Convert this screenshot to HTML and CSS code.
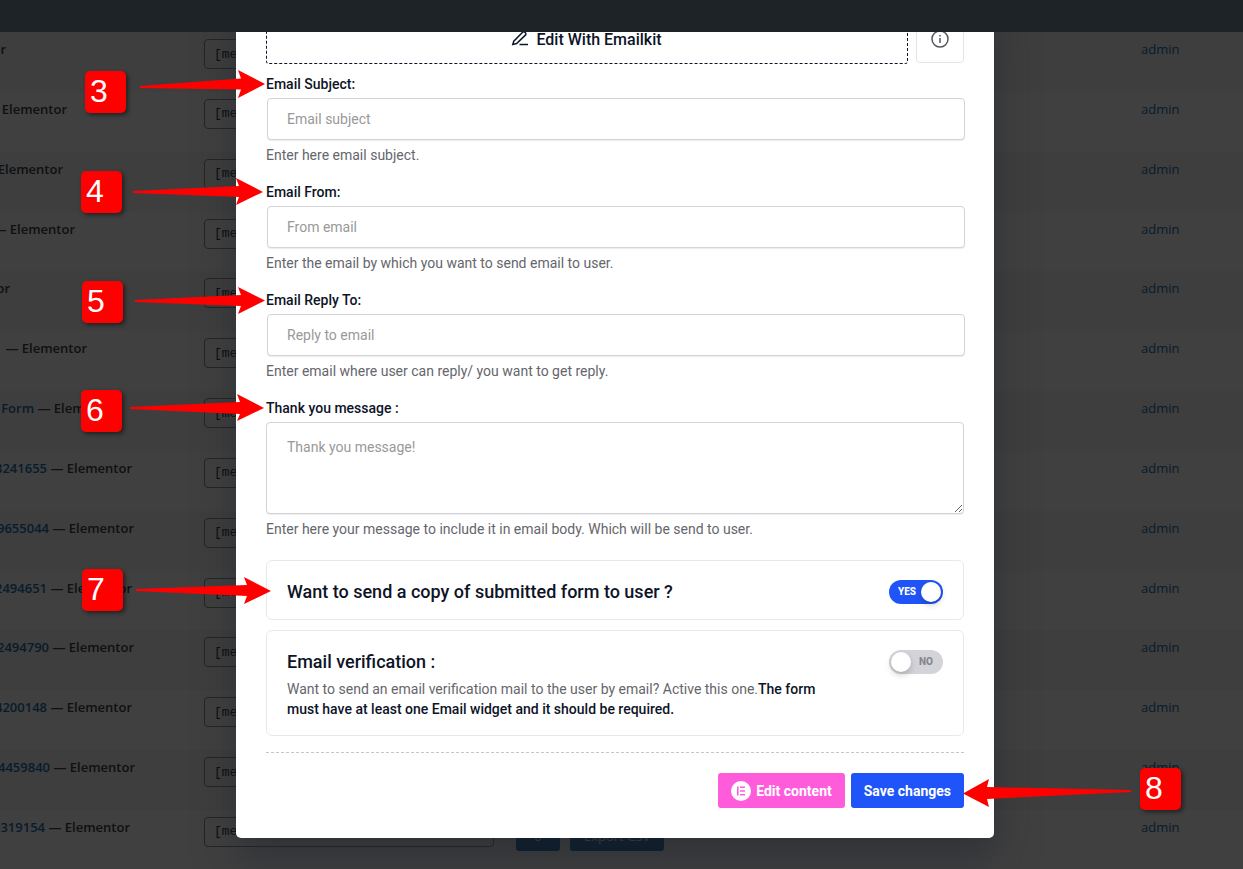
FILE: index.html
```html
<!DOCTYPE html>
<html lang="en">
<head>
<meta charset="utf-8">
<meta name="viewport" content="width=device-width, initial-scale=1">
<title>Form settings</title>
<link rel="stylesheet" href="styles.css">
</head>
<body>
<header class="admin-bar"></header>

<table class="forms">
  <colgroup><col class="col-title"><col class="col-code"><col><col class="col-author"></colgroup>
  <tbody id="rows"></tbody>
</table>

<div class="backdrop">
  <form class="modal" onsubmit="return false">
    <div class="kit-row">
      <button type="button" class="kit-button">
        <svg class="pen" viewBox="0 0 16 16" aria-hidden="true"><path d="M.8 12.500l1-3.400L10.600.3a1.600 1.600 0 0 1 2.300 0l.5.5a1.600 1.600 0 0 1 0 2.300L4.600 11.500zM7.500 12.500H16"/></svg>
        Edit With Emailkit
      </button>
      <button type="button" class="info-button" aria-label="Information">
        <svg class="info" viewBox="0 0 18 18" aria-hidden="true"><circle cx="9" cy="9" r="8"/><path d="M9 8v5M9 5v1.500"/></svg>
      </button>
    </div>

    <div class="field">
      <label for="subject">Email Subject:</label>
      <input id="subject" type="text" placeholder="Email subject">
      <p class="help">Enter here email subject.</p>
    </div>
    <div class="field">
      <label for="from">Email From:</label>
      <input id="from" type="text" placeholder="From email">
      <p class="help">Enter the email by which you want to send email to user.</p>
    </div>
    <div class="field">
      <label for="reply">Email Reply To:</label>
      <input id="reply" type="text" placeholder="Reply to email">
      <p class="help">Enter email where user can reply/ you want to get reply.</p>
    </div>
    <div class="field">
      <label for="thanks">Thank you message :</label>
      <textarea id="thanks" placeholder="Thank you message!"></textarea>
      <p class="help">Enter here your message to include it in email body. Which will be send to user.</p>
    </div>

    <div class="cards">
      <section class="card">
        <label class="card-title" for="copy">Want to send a copy of submitted form to user ?</label>
        <span class="switch"><input id="copy" type="checkbox" checked><span class="state on">YES</span><span class="state off">NO</span></span>
      </section>
      <section class="card">
        <div class="card-text">
          <label class="card-title" for="verify">Email verification :</label>
          <p class="card-help">Want to send an email verification mail to the user by email? Active this one.<strong>The form must have at least one Email widget and it should be required.</strong></p>
        </div>
        <span class="switch"><input id="verify" type="checkbox"><span class="state on">YES</span><span class="state off">NO</span></span>
      </section>
    </div>

    <footer class="actions">
      <button type="button" class="action edit">
        <svg class="elementor" viewBox="0 0 20 20" aria-hidden="true"><circle cx="10" cy="10" r="10" fill="#fff"/><path fill="#ff5cdc" d="M6 5.500h1.600v9H6zM9 5.500h5v1.600H9zM9 9.200h5v1.600H9zM9 12.900h5v1.600H9z"/></svg>
        Edit content
      </button>
      <button type="submit" class="action save">Save changes</button>
    </footer>
  </form>
</div>

<div class="notes">
  <svg class="arrows" aria-hidden="true">
    <path d="M140 86L241 78.500 238 70 265 84 238 98 241 89.500 140 88z"/>
    <path d="M133 191L239 186 236 178 263 192 236 205 239 197 133 193z"/>
    <path d="M135 300L241 295 238 287 265 300.500 238 314 241 306 135 302z"/>
    <path d="M130 407L240 402 237 394 264 408 237 421 240 414 130 409z"/>
    <path d="M136 589L247 585 244 577 271 591 244 604 247 596 136 591z"/>
    <path d="M1131 790L987 787 989 779 963 793.500 989 807 987 799 1131 792z"/>
  </svg>
  <span class="badge n3">3</span>
  <span class="badge n4">4</span>
  <span class="badge n5">5</span>
  <span class="badge n6">6</span>
  <span class="badge n7">7</span>
  <span class="badge n8">8</span>
</div>
<script src="rows.js"></script>
</body>
</html>
```
FILE: rows.js
```js
// name: tail of the form's link, note: text after it, end: where the scrolled title ends
const forms = [
  { name: "", note: "— Elementor", end: 6 },
  { name: "", note: "— Elementor", end: 67 },
  { name: "", note: "— Elementor", end: 63 },
  { name: "", note: "— Elementor", end: 75 },
  { name: "", note: "— Elementor", end: 10 },
  { name: "", note: "— Elementor", end: 87 },
  { name: "Form", note: "— Elementor", end: 119 },
  { name: "3241655", note: "— Elementor", end: 132 },
  { name: "9655044", note: "— Elementor", end: 134 },
  { name: "2494651", note: "— Elementor", end: 132 },
  { name: "2494790", note: "— Elementor", end: 134 },
  { name: "4200148", note: "— Elementor", end: 132 },
  { name: "4459840", note: "— Elementor", end: 135 },
  { name: "9319154", note: "— Elementor", end: 130, entries: 0 }
];
document.getElementById("rows").innerHTML = forms.map((f, i) => `
  <tr>
    <td><div class="title" style="width:${f.end}px"><span>${f.name ? `<a href="#">${f.name}</a> ` : ""}${f.note}</span></div></td>
    <td><input class="code" readonly aria-label="Shortcode ${i + 1}" value='[metform form_id="${1200 + i}"]'></td>
    <td>${"entries" in f ? `<div class="tools"><button type="button">${f.entries}</button><button type="button">Export CSV</button></div>` : ""}</td>
    <td><a class="author" href="#">admin</a></td>
  </tr>`).join("");
```
FILE: styles.css
```css
* { box-sizing: border-box; }

body {
  margin: 0;
  min-height: 100vh;
  overflow: hidden;
  background: #fff;
  color: #0d1427;
  font-family: Roboto, sans-serif;
  font-size: 14px;
  line-height: 20px;
}

button, input, textarea { font: inherit; color: inherit; }
p { margin: 0; }

.admin-bar {
  position: relative;
  z-index: 2;
  height: 32px;
  background: #1d2327;
}

/* Forms list behind the dialog */
.forms {
  width: 100%;
  height: calc(100vh - 31px);
  table-layout: fixed;
  border-collapse: collapse;
  font-family: "Open Sans", sans-serif;
  font-size: 13px;
  color: #3c434a;
}
.forms tr:nth-child(odd) { background: #f6f7f7; }
.forms td { padding: 7px 0 0; vertical-align: top; }
.forms a { color: #2271b1; text-decoration: none; }
.col-title { width: 204px; }
.col-code { width: 312px; }
.col-author { width: 102px; }
.title {
  display: flex;
  justify-content: flex-end;
  overflow: hidden;
  font-weight: 600;
  white-space: nowrap;
}
.code {
  display: block;
  width: 290px;
  height: 30px;
  margin: 0 0 4px;
  padding: 0 9px;
  border: 1px solid #8c8f94;
  border-radius: 4px;
  background: transparent;
  color: #2c3338;
  font-family: "Liberation Mono", monospace;
}
.tools { display: flex; gap: 10px; padding-top: 4px; }
.tools button {
  height: 30px;
  padding: 0 14px;
  min-width: 44px;
  border: 0;
  border-radius: 3px;
  background: #2271b1;
  color: #fff;
}

/* Dialog */
.backdrop {
  position: absolute;
  inset: 0;
  z-index: 1;
  display: flex;
  justify-content: center;
  align-items: flex-start;
  padding-right: 13px;
  background: rgba(0, 0, 0, .75);
}
.modal {
  width: 100%;
  max-width: 758px;
  padding: 15px 30px 30px;
  border-radius: 0 0 5px 5px;
  background: #fff;
  box-shadow: 0 20px 40px rgba(32, 35, 46, .5);
}

.kit-row { display: flex; gap: 8px; margin-bottom: 10px; }
.kit-button, .info-button {
  display: flex;
  align-items: center;
  justify-content: center;
  padding: 0;
  background: #fff;
}
.kit-button {
  flex: 1;
  height: 49px;
  gap: 8px;
  border: 1px dashed #0d1427;
  border-radius: 3px;
  font-size: 16px;
  font-weight: 500;
}
.info-button {
  width: 48px;
  height: 48px;
  border: 1px solid #e4e4e9;
  border-radius: 4px;
}
.pen, .info { fill: none; stroke: #0d1427; stroke-width: 1.5; }
.pen { width: 16px; height: 16px; overflow: visible; }
.info { width: 18px; height: 18px; stroke: #55565c; }

.field { margin-bottom: 17px; }
.field label { display: block; margin-bottom: 4px; font-weight: 500; }
.field input, .field textarea {
  display: block;
  width: 100%;
  border: 1px solid #d4d4d8;
  border-radius: 4px;
  background: #fff;
  box-shadow: 0 1px 1px rgba(0, 0, 0, .08);
}
.field input { height: 42px; margin: 0 1px; padding: 0 19px; }
.field textarea { height: 92px; padding: 14px 20px; }
.field ::placeholder { color: #999; opacity: 1; }
.help, .card-help { color: #65666c; }
.help { margin-top: 5px; }

.cards { display: flex; flex-direction: column; gap: 10px; padding-top: 4px; }
.card {
  display: flex;
  justify-content: space-between;
  align-items: flex-start;
  padding: 19px 20px 15px;
  border: 1px solid #e8e8eb;
  border-radius: 6px;
}
.card-title { font-size: 18px; font-weight: 500; line-height: 24px; }
.card-help { max-width: 540px; margin: 5px 0 1px; }
.card-help strong { color: #0d1427; font-weight: 500; }

.switch { position: relative; display: grid; width: 54px; height: 24px; }
.switch input {
  grid-area: 1 / 1;
  width: 54px;
  height: 24px;
  margin: 0;
  padding: 2px;
  display: flex;
  appearance: none;
  border-radius: 12px;
  background: #d3d3d9;
}
.switch input::before {
  content: "";
  width: 20px;
  height: 20px;
  border-radius: 50%;
  background: #fff;
  box-shadow: 0 3px 6px rgba(0, 0, 0, .2);
}
.switch input:checked { justify-content: flex-end; background: #1f55f8; }
.state {
  grid-area: 1 / 1;
  align-self: center;
  padding: 0 10px 0 9px;
  font-size: 10px;
  font-weight: 800;
  line-height: 12px;
  pointer-events: none;
}
.state.on { display: none; color: #fff; }
.state.off { justify-self: end; color: #85868b; }
.switch input:checked ~ .on { display: block; }
.switch input:checked ~ .off { display: none; }

.actions {
  display: flex;
  justify-content: flex-end;
  gap: 6px;
  margin-top: 16px;
  padding-top: 20px;
  border-top: 1px dashed #c6c6cf;
}
.action {
  display: flex;
  align-items: center;
  gap: 5px;
  height: 35px;
  padding: 0 13px;
  border: 0;
  border-radius: 3px;
  color: #fff;
  font-weight: 700;
}
.edit { background: #ff5cdc; }
.save { background: #1f55f8; }
.elementor { width: 20px; height: 20px; }

/* Numbered call-outs over the page */
.notes { position: absolute; inset: 0; z-index: 3; pointer-events: none; }
.arrows { width: 100%; height: 100%; fill: #f00; }
.badge {
  position: absolute;
  width: 41px;
  height: 42px;
  padding-left: 5px;
  border-radius: 5px;
  background: #f00;
  box-shadow: 2px 2px 4px rgba(0, 0, 0, .5);
  color: #fff;
  font: 32px/40px "Liberation Sans", Arial, sans-serif;
}
.n3 { left: 85px; top: 71px; }
.n4 { left: 81px; top: 171px; }
.n5 { left: 82px; top: 281px; }
.n6 { left: 81px; top: 390px; }
.n7 { left: 82px; top: 569px; }
.n8 { left: 1140px; top: 768px; }
```
